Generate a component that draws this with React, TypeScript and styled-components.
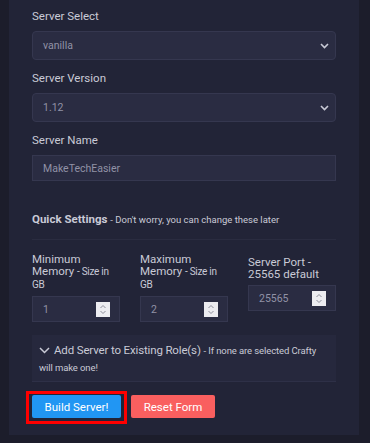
import React from 'react';
import styled, {createGlobalStyle} from 'styled-components';

const GlobalStyle = createGlobalStyle`
    html, body {
        margin: 0;
        padding: 0;
        background: #1c1d2b;
        font-family: Roboto, "Liberation Sans", sans-serif;
    }
`;

const Page = styled.div`
    width: 370px;
    height: 443px;
    padding: 0 11px 8px 9px;
    box-sizing: border-box;
    background: #1c1d2b;
    overflow: hidden;
`;

const Card = styled.div`
    background: #222437;
    height: 100%;
    padding: 9px 23px 0 23px;
    box-sizing: border-box;
    display: flex;
    flex-direction: column;
`;

const Label = styled.label`
    display: block;
    color: #c9cad6;
    font-size: 11.5px;
    line-height: 14px;
    margin-bottom: 8px;
`;

const Field = styled.div`
    margin-bottom: 11px;
`;

const SelectBox = styled.div`
    height: 29px;
    box-sizing: border-box;
    border: 1px solid #35374f;
    border-radius: 4px;
    background: #2a2c42;
    display: flex;
    align-items: center;
    justify-content: space-between;
    padding: 0 6px 0 10px;
    color: #9192a6;
    font-size: 10.5px;
`;

const TextInput = styled.div`
    height: 26px;
    box-sizing: border-box;
    border: 1px solid #35374f;
    background: #2a2c42;
    display: flex;
    align-items: center;
    padding: 0 10px;
    color: #9192a6;
    font-size: 10.5px;
`;

const QuickTitle = styled.div`
    margin-top: 20px;
    padding-bottom: 12px;
    border-bottom: 1px solid #2a2c40;
    color: #c9cad6;
    font-size: 11.5px;
    font-weight: 700;
    line-height: 14px;

    span {
        font-weight: 400;
        font-size: 9.5px;
    }
`;

const Columns = styled.div`
    display: grid;
    grid-template-columns: 88px 88px 88px;
    column-gap: 20px;
    margin-top: 13px;
    align-items: end;
`;

const ColLabel = styled.div`
    color: #c9cad6;
    font-size: 11.5px;
    line-height: 12px;
    margin-bottom: 5px;

    small {
        font-size: 10px;
        letter-spacing: -0.3px;
    }
`;

const NumberInput = styled.div`
    height: 26px;
    box-sizing: border-box;
    border: 1px solid #35374f;
    background: #2a2c42;
    display: flex;
    align-items: center;
    justify-content: space-between;
    padding: 0 9px 0 10px;
    color: #9192a6;
    font-size: 10.5px;
`;

const Spinner = styled.div`
    width: 14px;
    height: 15px;
    background: #ececf0;
    display: flex;
    align-items: center;
    justify-content: center;
`;

const Col = styled.div<{$raise?: boolean}>`
    display: flex;
    flex-direction: column;
    margin-bottom: ${p => (p.$raise ? '11px' : '0')};
`;

const Collapse = styled.div`
    margin-top: 13px;
    background: #26283d;
    border-bottom: 1px solid #2e3047;
    padding: 7px 6px 5px 7px;
    color: #c9cad6;
    font-size: 11.5px;
    line-height: 17px;
    letter-spacing: -0.15px;

    small {
        font-size: 9.5px;
        letter-spacing: -0.1px;
    }
`;

const Buttons = styled.div`
    display: flex;
    gap: 4px;
    margin-top: 9px;
    margin-left: -6px;
    align-items: flex-start;
`;

const Highlight = styled.div`
    border: 3px solid #ff0000;
    padding: 1px 3px 3px 3px;
    display: flex;
`;

const Button = styled.button<{$tone: 'blue' | 'red'}>`
    border: none;
    border-radius: 2px;
    height: 23px;
    width: ${p => (p.$tone === 'blue' ? '89px' : '84px')};
    padding: 0;
    background: ${p => (p.$tone === 'blue' ? '#2196f3' : '#f95f5f')};
    color: #ffffff;
    font-family: Roboto, "Liberation Sans", sans-serif;
    font-size: 11.5px;
    margin-top: ${p => (p.$tone === 'blue' ? '0' : '4px')};
`;

const Chevron = () => (
    <svg width='9' height='6' viewBox='0 0 9 6'>
        <path d='M1 1l3.5 3.5L8 1' stroke='#c9cad6' strokeWidth='1.6' fill='none'/>
    </svg>
);

const SpinIcon = () => (
    <svg width='8' height='11' viewBox='0 0 8 11'>
        <path d='M1.5 4L4 1.5 6.5 4M1.5 7L4 9.5 6.5 7' stroke='#8d8e9a' strokeWidth='1' fill='none'/>
    </svg>
);

const Select = ({label, value}: {label: string; value: string}) => (
    <Field>
        <Label>{label}</Label>
        <SelectBox>
            {value}
            <Chevron/>
        </SelectBox>
    </Field>
);

const App = () => (
    <>
        <GlobalStyle/>
        <Page>
            <Card>
                <Select label='Server Select' value='vanilla'/>
                <Select label='Server Version' value='1.12'/>
                <Field>
                    <Label>Server Name</Label>
                    <TextInput>MakeTechEasier</TextInput>
                </Field>
                <QuickTitle>
                    Quick Settings <span>- Don't worry, you can change these later</span>
                </QuickTitle>
                <Columns>
                    <Col>
                        <ColLabel>Minimum<br/>Memory <small>- Size in<br/>GB</small></ColLabel>
                        <NumberInput>1<Spinner><SpinIcon/></Spinner></NumberInput>
                    </Col>
                    <Col>
                        <ColLabel>Maximum<br/>Memory <small>- Size in<br/>GB</small></ColLabel>
                        <NumberInput>2<Spinner><SpinIcon/></Spinner></NumberInput>
                    </Col>
                    <Col $raise={true}>
                        <ColLabel>Server Port -<br/>25565 default</ColLabel>
                        <NumberInput>25565<Spinner><SpinIcon/></Spinner></NumberInput>
                    </Col>
                </Columns>
                <Collapse>
                    <svg width='11' height='7' viewBox='0 0 11 7' style={{marginRight: 4}}>
                        <path d='M1 1l4.5 4.5L10 1' stroke='#c9cad6' strokeWidth='1.5' fill='none'/>
                    </svg>
                    Add Server to Existing Role(s) <small>- If none are selected Crafty<br/>will make one!</small>
                </Collapse>
                <Buttons>
                    <Highlight>
                        <Button $tone='blue'>Build Server!</Button>
                    </Highlight>
                    <Button $tone='red'>Reset Form</Button>
                </Buttons>
            </Card>
        </Page>
    </>
);

export default App;
